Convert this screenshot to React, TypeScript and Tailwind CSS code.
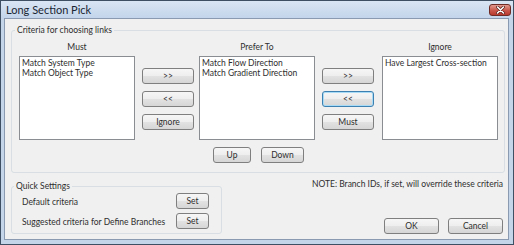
import type { ReactNode } from "react";

const mustItems = ["Match System Type", "Match Object Type"];
const preferItems = ["Match Flow Direction", "Match Gradient Direction"];
const ignoreItems = ["Have Largest Cross-section"];

function Btn({ children, className = "", focused = false }: { children: ReactNode; className?: string; focused?: boolean }) {
  return (
    <button
      type="button"
      className={`flex h-[16px] items-center justify-center rounded-[3px] border bg-[linear-gradient(#f6f6f6_0%,#eeeeee_50%,#e2e2e2_51%,#d6d6d6_100%)] text-[8.5px] leading-none text-[#2e2e2e] ${
        focused ? "border-[#3c7fb1] shadow-[inset_0_0_0_1px_#a8dcf6]" : "border-[#7f7f7f]"
      } ${className}`}
    >
      {children}
    </button>
  );
}

function ListBox({ items }: { items: string[] }) {
  return (
    <div className="h-[84px] w-[116px] border border-[#8a8d92] bg-white px-[2px] py-[1px] text-[8.5px] leading-[10px] text-[#2e2e2e]">
      {items.map((item) => (
        <div key={item} className="whitespace-nowrap">
          {item}
        </div>
      ))}
    </div>
  );
}

function Column({ title, items }: { title: string; items: string[] }) {
  return (
    <div className="flex flex-col">
      <div className="mb-[4px] h-[10px] text-center text-[8.5px] leading-[10px]">{title}</div>
      <ListBox items={items} />
    </div>
  );
}

function MoveButtons({ last, focusBack = false }: { last: string; focusBack?: boolean }) {
  return (
    <div className="flex w-[52px] flex-col gap-[7px] pt-[26px]">
      <Btn className="w-full">&gt;&gt;</Btn>
      <Btn className="w-full" focused={focusBack}>
        &lt;&lt;
      </Btn>
      <Btn className="w-full">{last}</Btn>
    </div>
  );
}

export default function App() {
  return (
    <div className="flex h-[245px] w-[514px] flex-col border border-[#3e4f63] bg-[#c4d5ea] font-['Lato',sans-serif] text-[#2e2e2e]">
      {/* title bar */}
      <div className="flex h-[17px] items-start bg-[linear-gradient(#d9e5f3,#c3d5eb)] pl-[5px] pr-[2px]">
        <span className="pt-[2px] text-[11px] leading-[13px] text-[#1a2633]">Long Section Pick</span>
        <div className="ml-auto mt-[3px] flex h-[12px] w-[22px] items-center justify-center rounded-[3px] border border-[#6e2b26] bg-[linear-gradient(#e29a8f,#c9574b_55%,#b8392f)]">
          <svg width="9" height="8" viewBox="0 0 9 8">
            <path d="M1.5 1 L7.5 7 M7.5 1 L1.5 7" stroke="#5a1d18" strokeWidth="3" strokeLinecap="round" />
            <path d="M1.5 1 L7.5 7 M7.5 1 L1.5 7" stroke="#ffffff" strokeWidth="1.6" strokeLinecap="round" />
          </svg>
        </div>
      </div>

      {/* client area */}
      <div className="flex flex-1 flex-col pb-[4px] pl-[3px] pr-[4px]">
        <div className="flex flex-1 flex-col border border-[#8a9bb1] bg-[#f0f0f0]">
          <fieldset className="ml-[6px] mt-[6px] w-[494px] rounded-[3px] border border-[#d8dee3] p-0">
            <legend className="ml-[3px] px-[2px] text-[8.5px] leading-[11px]">Criteria for choosing links</legend>
            <div className="pb-[9px] pl-[7px] pt-[6px]">
              <div className="flex">
                <Column title="Must" items={mustItems} />
                <div className="ml-[7px] mr-[5px]">
                  <MoveButtons last="Ignore" />
                </div>
                <Column title="Prefer To" items={preferItems} />
                <div className="ml-[7px] mr-[8px]">
                  <MoveButtons last="Must" focusBack />
                </div>
                <Column title="Ignore" items={ignoreItems} />
              </div>
              <div className="mt-[7px] flex gap-[10px] pl-[194px]">
                <Btn className="w-[38px]">Up</Btn>
                <Btn className="w-[43px]">Down</Btn>
              </div>
            </div>
          </fieldset>

          <div className="ml-[6px] flex flex-1">
            <fieldset className="mt-[8px] h-[53px] w-[211px] rounded-[3px] border border-[#d8dee3] p-0">
              <legend className="ml-[2px] px-[2px] text-[8.5px] leading-[11px]">Quick Settings</legend>
              <div className="flex flex-col gap-[4px] pl-[10px] pr-[12px] pt-[1px]">
                <div className="flex items-center text-[8.5px] leading-[10px]">
                  <span className="whitespace-nowrap pt-[2px]">Default criteria</span>
                  <Btn className="ml-auto w-[33px]">Set</Btn>
                </div>
                <div className="flex items-center text-[8.5px] leading-[10px]">
                  <span className="whitespace-nowrap pt-[2px]">Suggested criteria for Define Branches</span>
                  <Btn className="ml-auto w-[33px]">Set</Btn>
                </div>
              </div>
            </fieldset>
            <div className="flex flex-1 flex-col items-end pr-[5px]">
              <div className="mt-[6px] whitespace-nowrap text-[8.5px] leading-[10px]">NOTE: Branch IDs, if set, will override these criteria</div>
              <div className="mt-[29px] flex gap-[9px]">
                <Btn className="w-[55px]">OK</Btn>
                <Btn className="w-[55px]">Cancel</Btn>
              </div>
            </div>
          </div>
        </div>
      </div>
    </div>
  );
}
